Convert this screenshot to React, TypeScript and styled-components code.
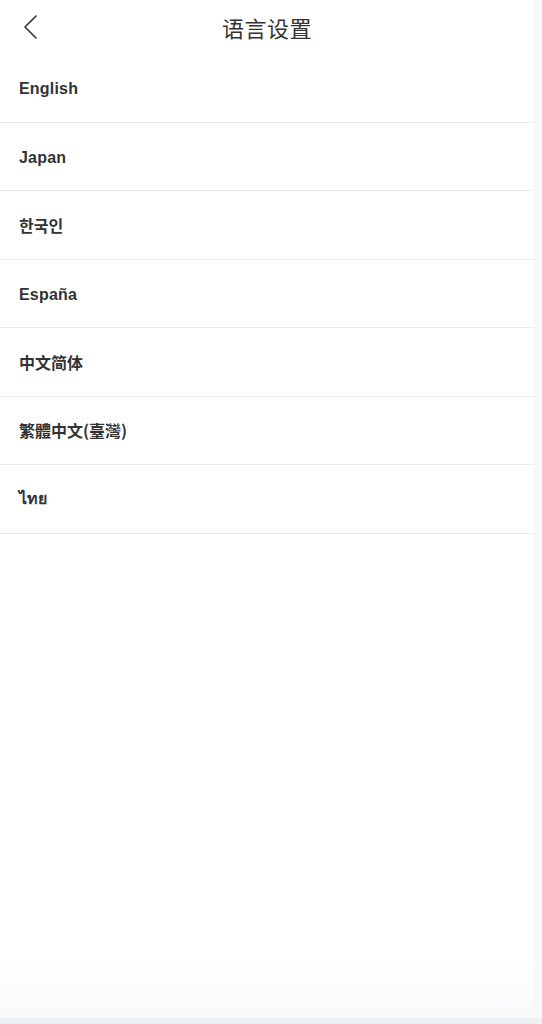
import React, { FC } from 'react';
import styled, { createGlobalStyle } from 'styled-components';

const GlobalStyle = createGlobalStyle`
  html, body {
    margin: 0;
    padding: 0;
    background: #f2f3f7;
  }

  body {
    font-family: "Liberation Sans", Arial, "Noto Sans CJK SC", "Noto Sans", sans-serif;
    color: #333;
  }
`;

const SFrame = styled.div`
  display: flex;
  width: 542px;
  height: 1024px;
  background: #f7f8fc;
  overflow: hidden;
`;

const SPage = styled.div`
  display: flex;
  flex-direction: column;
  width: 534px;
  height: 1018px;
  background: linear-gradient(180deg, #fff 0, #fff 960px, #f9f9fb 1018px);
`;

const SHeader = styled.header`
  display: grid;
  grid-template-columns: 60px 1fr 60px;
  align-items: center;
  height: 54px;
  flex-shrink: 0;
`;

const SBack = styled.button`
  display: flex;
  align-items: center;
  justify-content: flex-start;
  height: 100%;
  padding: 0 0 0 22px;
  border: none;
  background: none;
  color: #333;
  cursor: pointer;
`;

const STitle = styled.h1`
  margin: 0;
  text-align: center;
  font-family: "Noto Sans CJK SC", sans-serif;
  font-size: 22px;
  font-weight: 400;
  color: #333;
  letter-spacing: 0.5px;
`;

const SList = styled.ul`
  margin: 0;
  padding: 0;
  list-style: none;
`;

const SRow = styled.li`
  display: flex;
  align-items: center;
  height: 68.5px;
  padding: 0 19px;
  box-sizing: border-box;
  border-bottom: 1px solid #ececf0;

  font-size: 16px;
  font-weight: bold;
  color: #333;
  cursor: pointer;
`;

const SLabel = styled.span<{ $font?: string }>`
  ${({ $font }) => $font ? `font-family: ${$font};` : 'padding-top: 3px; letter-spacing: 0.2px;'}
`;

const SBottom = styled.div`
  width: 542px;
  height: 6px;
  background: #eff0f4;
`;

const languages: { key: string, label: string, font?: string }[] = [
  { key: 'en', label: 'English' },
  { key: 'ja', label: 'Japan' },
  { key: 'ko', label: '한국인', font: '"Noto Sans CJK KR", sans-serif' },
  { key: 'es', label: 'España' },
  { key: 'zh-cn', label: '中文简体', font: '"Noto Sans CJK SC", sans-serif' },
  { key: 'zh-tw', label: '繁體中文(臺灣)', font: '"Noto Sans CJK TC", sans-serif' },
  { key: 'th', label: 'ไทย', font: '"Noto Sans", "DejaVu Sans", sans-serif' }
];

const App: FC = () => (
  <>
    <GlobalStyle />
    <SFrame>
      <div>
        <SPage>
          <SHeader>
            <SBack aria-label='back'>
              <svg width='16' height='26' viewBox='0 0 16 26' fill='none'>
                <path d='M14 2 L3 13 L14 24' stroke='#333' strokeWidth='1.6' strokeLinecap='round' strokeLinejoin='round' />
              </svg>
            </SBack>
            <STitle>语言设置</STitle>
            <span />
          </SHeader>
          <SList>
            {languages.map(({ key, label, font }) => (
              <SRow key={key}>
                <SLabel $font={font}>{label}</SLabel>
              </SRow>
            ))}
          </SList>
        </SPage>
        <SBottom />
      </div>
    </SFrame>
  </>
);

export default App;
